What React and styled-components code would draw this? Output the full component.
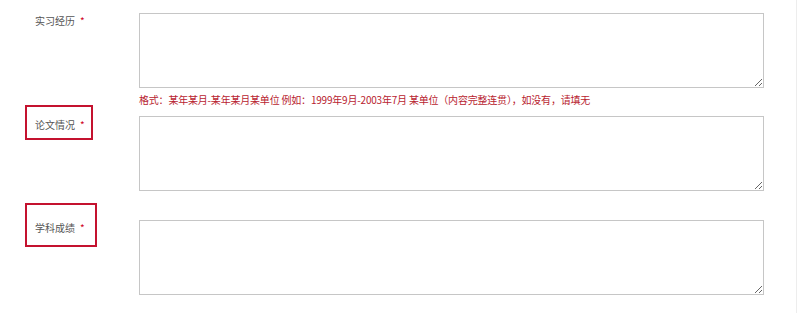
import styled, { createGlobalStyle } from 'styled-components';

const GlobalStyle = createGlobalStyle`
  html, body {
    margin: 0;
    padding: 0;
    background: #ffffff;
  }
  body {
    font-family: "Noto Sans CJK SC", "Liberation Sans", sans-serif;
  }
`;

const Page = styled.div`
  width: 797px;
  height: 313px;
  box-sizing: border-box;
  border-right: 1px solid #ededed;
  padding-top: 13px;
`;

const Row = styled.div`
  display: grid;
  grid-template-columns: 139px 625px;
  margin-bottom: ${props => props.$gap || 0}px;
`;

const LabelCell = styled.div`
  position: relative;
  padding-left: 35px;
  padding-top: ${props => props.$pt || 0}px;
  font-size: 10px;
  line-height: 15px;
`;

const Label = styled.span`
  display: block;
  font-size: 10px;
  line-height: 15px;
  color: #555;
  white-space: nowrap;
`;

const Star = styled.span`
  color: #d0021b;
  margin-left: 5px;
`;

// the red annotation frame drawn over the label
const Mark = styled.div`
  position: absolute;
  left: 25px;
  top: ${props => props.$top}px;
  width: ${props => props.$w}px;
  height: ${props => props.$h}px;
  box-sizing: border-box;
  border: 2px solid #c4122f;
  pointer-events: none;
`;

const Field = styled.div`
  display: flex;
  flex-direction: column;
`;

const TextArea = styled.textarea`
  display: block;
  width: 625px;
  height: 75px;
  box-sizing: border-box;
  margin: 0;
  border: 1px solid #c6c6c6;
  border-radius: 0;
  background: #fff;
  outline: none;
  font-family: inherit;
`;

const Hint = styled.div`
  font-size: 10px;
  line-height: 14px;
  padding: 5px 0 9px;
  color: #b8232f;
  letter-spacing: -0.2px;
  white-space: nowrap;
`;

const rows = [
  { label: '实习经历', hint: '格式：某年某月-某年某月某单位 例如：1999年9月-2003年7月 某单位（内容完整连贯），如没有，请填无', gap: 0 },
  { label: '论文情况', mark: { top: -11, w: 68, h: 35 }, pt: 1, gap: 29 },
  { label: '学科成绩', mark: { top: -17, w: 72, h: 44 }, gap: 0 },
];

export default function App() {
  return (
    <>
      <GlobalStyle />
      <Page>
        {rows.map(r => (
          <Row key={r.label} $gap={r.gap}>
            <LabelCell $pt={r.pt}>
              <Label>
                {r.label}<Star>*</Star>
              </Label>
              {r.mark && <Mark $top={r.mark.top} $w={r.mark.w} $h={r.mark.h} />}
            </LabelCell>
            <Field>
              <TextArea />
              {r.hint && <Hint>{r.hint}</Hint>}
            </Field>
          </Row>
        ))}
      </Page>
    </>
  );
}
